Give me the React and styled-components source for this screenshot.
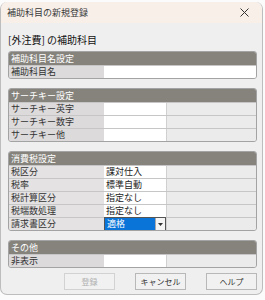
import styled, { createGlobalStyle } from 'styled-components';

const Global = createGlobalStyle`
  body {
    margin: 0;
    background: #fbfbfb;
    font-family: "Noto Sans CJK JP", "Noto Sans", sans-serif;
    color: #222;
  }
`;

const Dialog = styled.div`
  margin-top: 2px;
  width: 263px;
  height: 293px;
  box-sizing: border-box;
  border: 1px solid #bdbdbd;
  border-top: none;
  border-radius: 7px;
  overflow: hidden;
  background: #efefef;
  display: flex;
  flex-direction: column;
`;

const TitleBar = styled.div`
  height: 21px;
  flex: none;
  background: #f8efe9;
  display: flex;
  align-items: center;
  justify-content: space-between;
  padding: 0 13px 0 6px;
  font-size: 9px;
  color: #3a3a3a;
`;

const Body = styled.div`
  padding: 0 5px 0 7px;
  display: flex;
  flex-direction: column;
`;

const Subtitle = styled.div`
  height: 20px;
  margin-top: 8px;
  font-size: 10px;
  line-height: 18px;
  color: #111;
`;

const Section = styled.div`
  border: 1px solid #a3a3a3;
  border-radius: 3px;
  overflow: hidden;
  background: #eaeaea;
  margin-bottom: 9px;
`;

const Header = styled.div`
  height: 13px;
  background: #85837c;
  color: #fff;
  font-size: 9px;
  line-height: 13px;
  padding-left: 2px;
`;

const Row = styled.div`
  display: grid;
  grid-template-columns: 95px ${(p) => (p.$full ? '1fr' : '62px 1fr')};
  height: 12px;
  border-top: 1px solid #c6c6c6;
  font-size: 9px;
  line-height: 12px;
`;

const Label = styled.div`
  background: ${(p) => (p.$light ? '#e4e2e2' : '#dcdadb')};
  padding-left: 2px;
  white-space: nowrap;
  color: #333;
`;

const Value = styled.div`
  background: #fff;
  padding-left: 2px;
  color: #222;
  white-space: nowrap;
`;

const Rest = styled.div`
  background: #ebebeb;
  border-left: 1px solid #d0d0d0;
`;

const Select = styled.div`
  display: flex;
  background: #fff;
  border: 1px solid #555;
  box-sizing: border-box;
  margin-top: -1px;
  height: 14px;
`;

const Selected = styled.div`
  flex: 1;
  background: #0a74d8;
  color: #fff;
  padding-left: 2px;
  line-height: 12px;
`;

const Arrow = styled.div`
  width: 9px;
  display: flex;
  align-items: center;
  justify-content: center;
  background: #f4f4f4;
  border-left: 1px solid #aaa;
`;

const Buttons = styled.div`
  display: flex;
  justify-content: flex-end;
  gap: 20px;
  margin-top: -4px;
`;

const Button = styled.div`
  width: 51px;
  height: 17px;
  box-sizing: border-box;
  border: 1px solid ${(p) => (p.$disabled ? '#d2d2d2' : '#b8b8b8')};
  background: #f1f1f1;
  color: ${(p) => (p.$disabled ? '#b0b0b0' : '#333')};
  font-size: 8px;
  display: flex;
  align-items: center;
  justify-content: center;
`;

const taxRows = [
  ['税区分', '課対仕入'],
  ['税率', '標準自動'],
  ['税計算区分', '指定なし'],
  ['税端数処理', '指定なし'],
];

export default function App() {
  return (
    <>
      <Global />
      <Dialog>
        <TitleBar>
          <span>補助科目の新規登録</span>
          <svg width="9" height="9" viewBox="0 0 9 9">
            <path d="M0.5 0.5 L8.5 8.5 M8.5 0.5 L0.5 8.5" stroke="#333" strokeWidth="1" />
          </svg>
        </TitleBar>
        <Body>
          <Subtitle>[外注費] の補助科目</Subtitle>

          <Section>
            <Header>補助科目名設定</Header>
            <Row $full>
              <Label>補助科目名</Label>
              <Value />
            </Row>
          </Section>

          <Section>
            <Header>サーチキー設定</Header>
            {['サーチキー英字', 'サーチキー数字', 'サーチキー他'].map((t) => (
              <Row key={t}>
                <Label>{t}</Label>
                <Value />
                <Rest />
              </Row>
            ))}
          </Section>

          <Section>
            <Header>消費税設定</Header>
            {taxRows.map(([l, v]) => (
              <Row key={l}>
                <Label $light>{l}</Label>
                <Value>{v}</Value>
                <Rest />
              </Row>
            ))}
            <Row>
              <Label $light>請求書区分</Label>
              <Select>
                <Selected>適格</Selected>
                <Arrow>
                  <svg width="5" height="3" viewBox="0 0 5 3">
                    <path d="M0 0 H5 L2.5 3 Z" fill="#333" />
                  </svg>
                </Arrow>
              </Select>
              <Rest />
            </Row>
          </Section>

          <Section>
            <Header>その他</Header>
            <Row>
              <Label>非表示</Label>
              <Value />
              <Rest />
            </Row>
          </Section>

          <Buttons>
            <Button $disabled>登録</Button>
            <Button>キャンセル</Button>
            <Button>ヘルプ</Button>
          </Buttons>
        </Body>
      </Dialog>
    </>
  );
}
